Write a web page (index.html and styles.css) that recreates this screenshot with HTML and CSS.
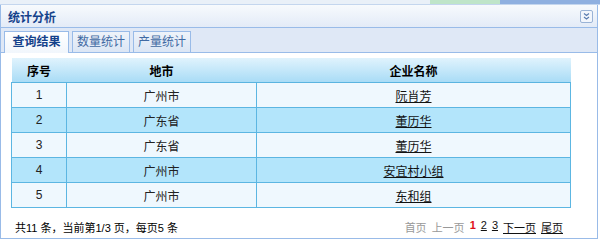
FILE: index.html
```html
<!DOCTYPE html>
<html>
<head>
<meta charset="utf-8">
<link rel="stylesheet" href="styles.css">
</head>
<body>
<div class="topstrip"><span class="s1"></span><span class="s2"></span><span class="s3"></span></div>
<div class="panel">
  <div class="panel-header">
    <span class="title">统计分析</span>
    <span class="tool"><svg width="9" height="9" viewBox="0 0 9 9"><path d="M2 1.5 L4.5 3.5 L7 1.5 M2 5 L4.5 7 L7 5" fill="none" stroke="#5a7cb0" stroke-width="1.2"/></svg></span>
  </div>
  <div class="tabbar">
    <div class="tab active">查询结果</div>
    <div class="tab">数量统计</div>
    <div class="tab">产量统计</div>
  </div>
  <div class="content">
    <table class="grid">
      <thead>
        <tr><th class="c1">序号</th><th class="c2">地市</th><th class="c3">企业名称</th></tr>
      </thead>
      <tbody>
        <tr class="odd"><td>1</td><td>广州市</td><td><a>阮肖芳</a></td></tr>
        <tr class="even"><td>2</td><td>广东省</td><td><a>董历华</a></td></tr>
        <tr class="odd"><td>3</td><td>广东省</td><td><a>董历华</a></td></tr>
        <tr class="even"><td>4</td><td>广州市</td><td><a>安宜村小组</a></td></tr>
        <tr class="odd"><td>5</td><td>广州市</td><td><a>东和组</a></td></tr>
      </tbody>
    </table>
    <div class="footer">
      <span class="info">共11 条，当前第1/3 页，每页5 条</span>
      <span class="pager"><span class="dis">首页</span><span class="dis">上一页</span><span class="cur">1</span><a>2</a><a>3</a><a>下一页</a><a>尾页</a></span>
    </div>
  </div>
</div>
</body>
</html>
```
FILE: styles.css
```css
body {
  margin: 0;
  background: #ffffff;
  font-family: "Liberation Sans", "Noto Sans CJK SC", sans-serif;
  font-size: 12px;
  color: #000;
  width: 600px;
  height: 242px;
  overflow: hidden;
}
.topstrip {
  height: 4px;
  display: flex;
  background: #dfe8f6;
  border-bottom: 1px solid #c4d6ee;
}
.topstrip .s1 { width: 430px; background: #e9f0f8; }
.topstrip .s2 { width: 70px; background: #bfe5c9; }
.topstrip .s3 { flex: 1; background: #8fb0e0; }
.panel {
  width: 596px;
  border: 1px solid #99bbe8;
  border-top: none;
  background: #ffffff;
}
.panel-header {
  height: 22px;
  display: flex;
  align-items: center;
  justify-content: space-between;
  padding: 0 2px 0 7px;
  background: linear-gradient(#f7fafd, #e3ebf7);
  border-bottom: 1px solid #99bbe8;
}
.title {
  font-weight: bold;
  color: #15428b;
  font-size: 12px;
}
.tool {
  width: 11px;
  height: 11px;
  border: 1px solid #9ab3d6;
  border-radius: 2px;
  background: #f2f6fc;
  display: flex;
  align-items: center;
  justify-content: center;
  margin-right: 2px;
}
.tabbar {
  height: 22px;
  padding: 2px 0 0 3px;
  background: #dfe8f6;
  border-bottom: 1px solid #99bbe8;
  display: flex;
  align-items: flex-end;
  gap: 3px;
}
.tab {
  height: 20px;
  line-height: 20px;
  width: 56px;
  text-align: center;
  border: 1px solid #99bbe8;
  border-bottom: none;
  background: linear-gradient(#eef3fa, #dbe6f5);
  color: #416aa3;
  font-size: 12px;
}
.tab.active {
  height: 21px;
  width: 63px;
  margin-bottom: -1px;
  background: linear-gradient(#ffffff, #f1f6fc);
  color: #15428b;
  font-weight: bold;
}
.content {
  padding: 5px 10px 0 10px;
  height: 180px;
}
.grid {
  width: 560px;
  border-collapse: collapse;
  font-size: 12px;
}
.grid th {
  height: 24px;
  background: linear-gradient(#e0f3fd, #a9dcf6);
  font-weight: bold;
  border-bottom: 1px solid #5ab4e0;
  padding: 0;
}
.grid th.c1 { width: 55px; }
.grid th.c2 { width: 190px; }
.grid td {
  height: 24px;
  text-align: center;
  border: 1px solid #5cb6e2;
  padding: 0;
  color: #222;
}
.grid tr.odd td { background: #eff8fe; }
.grid tr.even td { background: #b3e5fb; }
.grid a { text-decoration: underline; color: #111; }
.footer {
  display: flex;
  justify-content: space-between;
  align-items: center;
  width: 548px;
  padding: 9px 0 0 4px;
  height: 20px;
  font-size: 11px;
}
.pager { display: flex; gap: 5px; font-size: 11px; }
.pager .dis { color: #999; }
.pager .cur { color: #e0101a; font-weight: bold; }
.pager a { color: #111; text-decoration: underline; }
```
